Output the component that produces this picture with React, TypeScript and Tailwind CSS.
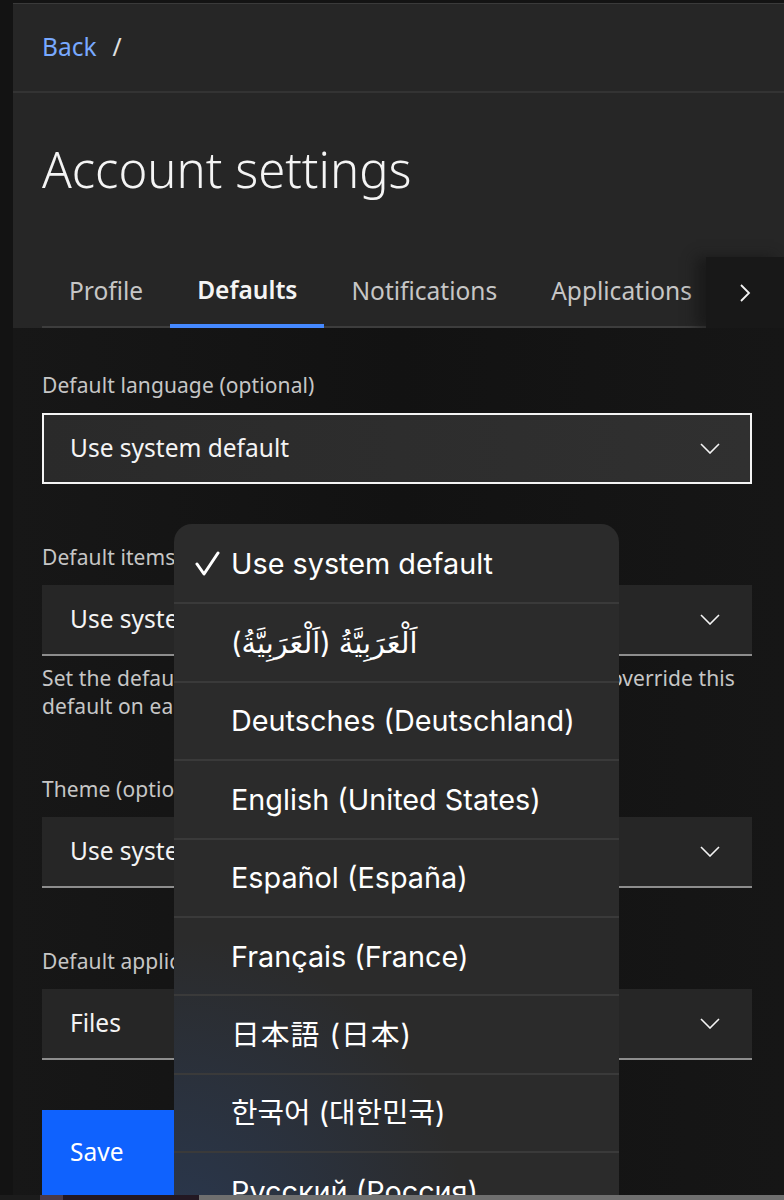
import React from "react";

const fields = [
  { label: "Default items view (optional)", value: "Use system default" },
];

const languages = [
  { text: "Use system default", checked: true },
  { text: "اَلْعَرَبِيَّةُ (اَلْعَرَبِيَّةُ)", font: "font-['Inter','DejaVu_Sans',sans-serif]" },
  { text: "Deutsches (Deutschland)" },
  { text: "English (United States)" },
  { text: "Español (España)" },
  { text: "Français (France)" },
  { text: "日本語 (日本)", font: "font-['Inter','Noto_Sans_CJK_JP',sans-serif] tracking-[1px]" },
  { text: "한국어 (대한민국)", font: "font-['Inter','Noto_Sans_CJK_KR',sans-serif]" },
  { text: "Русский (Россия)" },
];

const ChevronDown = () => (
  <svg width="20" height="11" viewBox="0 0 20 11" fill="none" className="shrink-0">
    <path d="M1 1l9 9 9-9" stroke="#f4f4f4" strokeWidth="1.6" />
  </svg>
);

const Label = ({ children }: { children: React.ReactNode }) => (
  <div className="h-[28px] text-[21px] leading-[28px] text-[#c6c6c6] tracking-[0.1px]">{children}</div>
);

const Select = ({ value, focused }: { value: string; focused?: boolean }) => (
  <div
    className={
      focused
        ? "mt-[14px] flex h-[71px] items-center justify-between border-2 border-[#f4f4f4] bg-gradient-to-r from-[#2a2a2a] to-[#303030] pl-[26px] pr-[30px]"
        : "mt-[14px] flex h-[71px] items-center justify-between border-b-2 border-[#8d8d8d] bg-[#262626] pl-[28px] pr-[32px]"
    }
  >
    <span className="text-[24.5px] text-[#f4f4f4]">{value}</span>
    <ChevronDown />
  </div>
);

export default function App() {
  return (
    <div className="relative h-[1200px] w-[784px] overflow-hidden bg-[#131313] font-['Noto_Sans',sans-serif]">
      <div className="ml-[13px] flex h-full flex-col">
        {/* header panel */}
        <div className="mt-[3px] border-t border-[#3a3a3a] bg-[#262626]">
          <div className="flex h-[89px] items-center gap-[16px] border-b-2 border-[#333333] px-[29px] text-[24.5px]">
            <span className="text-[#78a9ff]">Back</span>
            <span className="text-[#e0e0e0]">/</span>
          </div>
          <h1 className="px-[29px] pt-[46px] pb-[58px] text-[49px] font-light leading-[60px] text-[#f4f4f4]">
            Account settings
          </h1>
          <div className="flex h-[71px] items-stretch">
            <div className="flex min-w-0 flex-1 items-stretch overflow-hidden pl-[29px] text-[24.5px]">
              <div className="flex shrink-0 items-center border-b-2 border-[#3d3d3d] px-[27px] text-[#c6c6c6]">Profile</div>
              <div className="flex shrink-0 items-center border-b-4 border-[#4589ff] px-[27px] font-semibold text-[#f4f4f4]">
                Defaults
              </div>
              <div className="flex shrink-0 items-center border-b-2 border-[#3d3d3d] px-[27px] text-[#c6c6c6]">Notifications</div>
              <div className="flex shrink-0 items-center border-b-2 border-[#3d3d3d] px-[27px] text-[#c6c6c6]">Applications</div>
            </div>
            <div className="flex w-[78px] shrink-0 items-center justify-center bg-[#181818] shadow-[-10px_0_12px_rgba(24,24,24,0.8)]">
              <svg width="12" height="20" viewBox="0 0 12 20" fill="none">
                <path d="M2 2l8 8-8 8" stroke="#f4f4f4" strokeWidth="1.8" />
              </svg>
            </div>
          </div>
        </div>

        {/* form */}
        <div className="flex-1 bg-gradient-to-r from-[#171717] via-[#121212] to-[#161616] px-[29px] pt-[43px] pr-[32px]">
          <Label>Default language (optional)</Label>
          <Select value="Use system default" focused />

          <div className="mt-[59px]">
            <Label>{fields[0].label}</Label>
            <Select value={fields[0].value} />
            <p className="mt-[8px] text-[21px] leading-[28px] tracking-[0.1px] text-[#c6c6c6]">
              Set the default view for items in all of your apps. You can override this
              <br />
              default on each application's settings page.
            </p>
          </div>

          <div className="mt-[55px]">
            <Label>Theme (optional)</Label>
            <Select value="Use system default" />
          </div>

          <div className="mt-[59px]">
            <Label>Default application (optional)</Label>
            <Select value="Files" />
          </div>

          <button className="mt-[50px] flex h-[85px] w-[240px] items-center bg-[#0f62fe] pl-[28px] text-[24.5px] text-white">
            Save
          </button>
        </div>
      </div>

      {/* language picker */}
      <div className="absolute left-[174px] top-[524px] w-[445px] overflow-hidden rounded-[18px] bg-[#2b2b2b] bg-[radial-gradient(circle_at_0%_100%,rgba(40,70,120,0.45),transparent_35%)] font-['Inter',sans-serif] text-white">
        {languages.map((l, i) => (
          <div
            key={l.text}
            className={`flex h-[78.4px] items-center ${i > 0 ? "border-t-2 border-[#3a3a3a]" : ""}`}
          >
            <div className="flex w-[57px] justify-center pl-[8px]">
              {l.checked && (
                <svg width="26" height="26" viewBox="0 0 26 26" fill="none">
                  <path d="M3 14l7 10L24 3" stroke="#ffffff" strokeWidth="3" strokeLinecap="round" strokeLinejoin="round" />
                </svg>
              )}
            </div>
            <span className={`text-[28.8px] ${l.font ?? ""}`}>{l.text}</span>
          </div>
        ))}
      </div>

      {/* bottom edge */}
      <div className="absolute bottom-0 left-0 flex h-[5px] w-full">
        <div className="w-[40px] bg-[#1c1c1c]" />
        <div className="w-[23px] bg-[#4a3a48]" />
        <div className="w-[136px] bg-[#231822]" />
        <div className="flex-1 bg-[#6f6f6f]" />
      </div>
    </div>
  );
}
